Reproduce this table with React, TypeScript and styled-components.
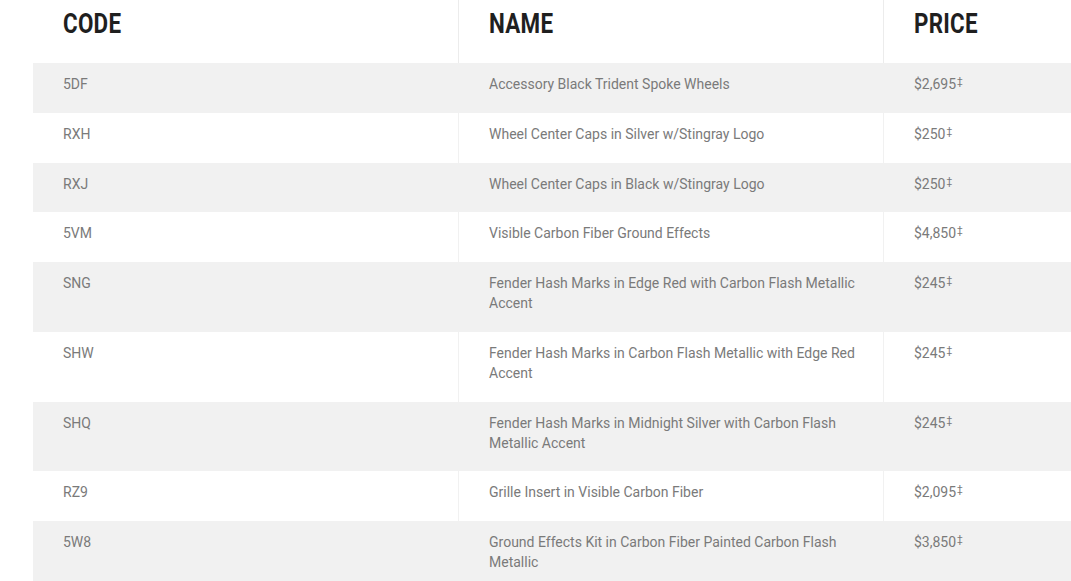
import styled, { createGlobalStyle } from 'styled-components';

type Item = {
  code: string;
  name: string;
  price: string;
};

const items: Item[] = [
  { code: '5DF', name: 'Accessory Black Trident Spoke Wheels', price: '$2,695' },
  { code: 'RXH', name: 'Wheel Center Caps in Silver w/Stingray Logo', price: '$250' },
  { code: 'RXJ', name: 'Wheel Center Caps in Black w/Stingray Logo', price: '$250' },
  { code: '5VM', name: 'Visible Carbon Fiber Ground Effects', price: '$4,850' },
  { code: 'SNG', name: 'Fender Hash Marks in Edge Red with Carbon Flash Metallic Accent', price: '$245' },
  { code: 'SHW', name: 'Fender Hash Marks in Carbon Flash Metallic with Edge Red Accent', price: '$245' },
  { code: 'SHQ', name: 'Fender Hash Marks in Midnight Silver with Carbon Flash Metallic Accent', price: '$245' },
  { code: 'RZ9', name: 'Grille Insert in Visible Carbon Fiber', price: '$2,095' },
  { code: '5W8', name: 'Ground Effects Kit in Carbon Fiber Painted Carbon Flash Metallic', price: '$3,850' },
];

const GlobalStyle = createGlobalStyle`
  html, body {
    margin: 0;
    padding: 0;
    background: #fff;
    overflow: hidden;
  }
  body {
    font-family: Roboto, "Liberation Sans", sans-serif;
  }
`;

const Page = styled.div`
  padding-left: 33px;
  width: 1100px;
  overflow: hidden;
`;

const Table = styled.div`
  width: 1275px;
`;

type RowProps = {
  shaded: boolean;
};

const Row = styled.div<RowProps>`
  display: grid;
  grid-template-columns: 425px 425px 425px;
  background-color: ${(props) => (props.shaded ? '#f1f1f1' : '#fff')};
`;

const HeadCell = styled.div`
  height: 63px;
  box-sizing: border-box;
  padding: 7px 30px 0;
  & + & {
    border-left: 1px solid #ececec;
  }
`;

const HeadLabel = styled.span`
  display: inline-block;
  font-family: Roboto, "Liberation Sans", sans-serif;
  font-weight: 700;
  font-size: 28px;
  line-height: 34px;
  letter-spacing: 0.3px;
  color: #1f1f1f;
  transform: scaleX(0.8);
  transform-origin: left center;
`;

const Cell = styled.div`
  box-sizing: border-box;
  padding: 11px 18px 18.75px 30px;
  font-size: 14px;
  line-height: 20px;
  color: #7a7a7a;
  & + & {
    border-left: 1px solid #f1f1f1;
  }
`;

const Dagger = styled.sup`
  font-size: 10px;
  line-height: 0;
  vertical-align: 4px;
  margin-left: 1px;
`;

const App = () => {
  return (
    <Page>
      <GlobalStyle />
      <Table>
        <Row shaded={false}>
          <HeadCell>
            <HeadLabel>CODE</HeadLabel>
          </HeadCell>
          <HeadCell>
            <HeadLabel>NAME</HeadLabel>
          </HeadCell>
          <HeadCell>
            <HeadLabel>PRICE</HeadLabel>
          </HeadCell>
        </Row>
        {items.map((item, i) => (
          <Row key={item.code} shaded={i % 2 === 0}>
            <Cell>{item.code}</Cell>
            <Cell>{item.name}</Cell>
            <Cell>
              {item.price}
              <Dagger>‡</Dagger>
            </Cell>
          </Row>
        ))}
      </Table>
    </Page>
  );
};

export default App;
